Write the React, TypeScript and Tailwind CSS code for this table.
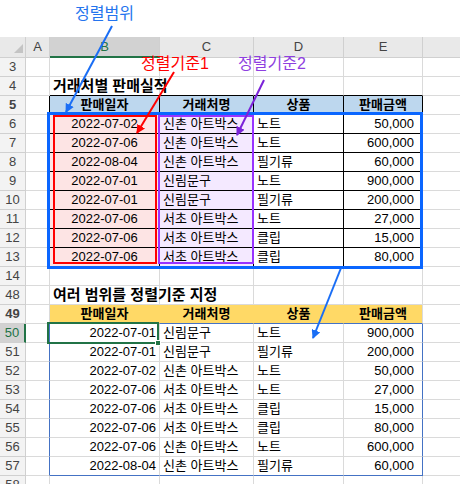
const upper = [
    ["2022-07-02", "신촌 아트박스", "노트", "50,000"],
    ["2022-07-06", "신촌 아트박스", "노트", "600,000"],
    ["2022-08-04", "신촌 아트박스", "필기류", "60,000"],
    ["2022-07-01", "신림문구", "노트", "900,000"],
    ["2022-07-01", "신림문구", "필기류", "200,000"],
    ["2022-07-06", "서초 아트박스", "노트", "27,000"],
    ["2022-07-06", "서초 아트박스", "클립", "15,000"],
    ["2022-07-06", "서초 아트박스", "클립", "80,000"],
];

const lower = [
    ["2022-07-01", "신림문구", "노트", "900,000"],
    ["2022-07-01", "신림문구", "필기류", "200,000"],
    ["2022-07-02", "신촌 아트박스", "노트", "50,000"],
    ["2022-07-06", "서초 아트박스", "노트", "27,000"],
    ["2022-07-06", "서초 아트박스", "클립", "15,000"],
    ["2022-07-06", "서초 아트박스", "클립", "80,000"],
    ["2022-07-06", "신촌 아트박스", "노트", "600,000"],
    ["2022-08-04", "신촌 아트박스", "필기류", "60,000"],
];

const headers = ["판매일자", "거래처명", "상품", "판매금액"];

const RowHead = ({ n, active = false }: { n: number; active?: boolean }) => (
    <div
        className={
            active
                ? "flex w-[26px] shrink-0 items-center justify-center border-r-2 border-b border-r-[#217346] border-b-[#d0d0d0] bg-[#d2d2d2] text-[#217346]"
                : "flex w-[26px] shrink-0 items-center justify-center border-r border-b border-[#d0d0d0] bg-[#f3f3f3] text-[#444]"
        }
    >
        {n}
    </div>
);

// plain grid row
const EmptyRow = ({ n }: { n: number }) => (
    <div className="flex h-[19px]">
        <RowHead n={n} />
        <div className="w-[24px] border-r border-b border-[#dadada]" />
        <div className="w-[110px] border-r border-b border-[#dadada]" />
        <div className="w-[94px] border-r border-b border-[#dadada]" />
        <div className="w-[90px] border-r border-b border-[#dadada]" />
        <div className="w-[79px] border-r border-b border-[#dadada]" />
        <div className="flex-1 border-b border-[#dadada]" />
    </div>
);

const TitleRow = ({ n, title }: { n: number; title: string }) => (
    <div className="flex h-[19px]">
        <RowHead n={n} />
        <div className="w-[24px] border-r border-b border-[#dadada]" />
        <div className="relative w-[110px] border-r border-b border-[#dadada]">
            <span className="absolute left-[3px] top-[-2px] whitespace-nowrap text-[15px] font-bold">{title}</span>
        </div>
        <div className="w-[94px] border-r border-b border-[#dadada]" />
        <div className="w-[90px] border-r border-b border-[#dadada]" />
        <div className="w-[79px] border-r border-b border-[#dadada]" />
        <div className="flex-1 border-b border-[#dadada]" />
    </div>
);

const App = () => {
    return (
        <div className="relative h-[484px] w-[460px] overflow-hidden bg-white text-[13px] text-black font-['Liberation_Sans','Noto_Sans_CJK_KR',sans-serif]">
            {/* callout above sheet */}
            <div className="h-[37px] pl-[75px] pt-[2px] text-[16px] text-[#2474ee]">정렬범위</div>

            {/* column letters */}
            <div className="flex h-[21px] text-[#444]">
                <div className="relative w-[26px] border-r border-b border-[#d0d0d0] bg-[#e9e9e9]">
                    <svg className="absolute left-[14px] top-[7px]" width="9" height="9" viewBox="0 0 9 9">
                        <polygon points="9,0 9,9 0,9" fill="#c4c4c4" />
                    </svg>
                </div>
                <div className="flex w-[24px] items-center justify-center border-r border-b border-[#d0d0d0] bg-[#e9e9e9]">A</div>
                <div className="flex w-[110px] items-center justify-center border-r border-b-2 border-r-[#d0d0d0] border-b-[#217346] bg-[#d2d2d2] text-[#217346]">B</div>
                <div className="flex w-[94px] items-center justify-center border-r border-b border-[#d0d0d0] bg-[#e9e9e9]">C</div>
                <div className="flex w-[90px] items-center justify-center border-r border-b border-[#d0d0d0] bg-[#e9e9e9]">D</div>
                <div className="flex w-[79px] items-center justify-center border-r border-b border-[#d0d0d0] bg-[#e9e9e9]">E</div>
                <div className="flex-1 border-b border-[#d0d0d0] bg-[#e9e9e9]" />
            </div>

            <EmptyRow n={3} />

            {/* row 4 title, bottom edge black under B-E */}
            <div className="flex h-[19px]">
                <RowHead n={4} />
                <div className="w-[24px] border-r border-b border-[#dadada]" />
                <div className="relative w-[110px] border-r border-b border-r-[#dadada] border-b-black">
                    <span className="absolute left-[3px] top-[-2px] whitespace-nowrap text-[15px] font-bold">거래처별 판매실적</span>
                </div>
                <div className="w-[94px] border-r border-b border-r-[#dadada] border-b-black" />
                <div className="w-[90px] border-r border-b border-r-[#dadada] border-b-black" />
                <div className="w-[79px] border-r border-b border-r-[#dadada] border-b-black" />
                <div className="flex-1 border-b border-[#dadada]" />
            </div>

            {/* row 5 header */}
            <div className="flex h-[19px] font-bold">
                <RowHead n={5} />
                <div className="w-[24px] border-r border-b border-r-black border-b-[#dadada]" />
                <div className="flex w-[110px] items-center justify-center border-r border-b border-black bg-[#bdd7ee]">{headers[0]}</div>
                <div className="flex w-[94px] items-center justify-center border-r border-b border-black bg-[#bdd7ee]">{headers[1]}</div>
                <div className="flex w-[90px] items-center justify-center border-r border-b border-black bg-[#bdd7ee]">{headers[2]}</div>
                <div className="flex w-[79px] items-center justify-center border-r border-b border-black bg-[#bdd7ee]">{headers[3]}</div>
                <div className="flex-1 border-b border-[#dadada]" />
            </div>

            {upper.map((r, i) => (
                <div key={i} className="flex h-[19px]">
                    <RowHead n={6 + i} />
                    <div className="w-[24px] border-r border-b border-r-black border-b-[#dadada]" />
                    <div className="flex w-[110px] items-center justify-center border-r border-b border-black bg-[#fde4e4]">{r[0]}</div>
                    <div className="flex w-[94px] items-center whitespace-nowrap border-r border-b border-black bg-[#f4e9ff] pl-[3px]">{r[1]}</div>
                    <div className="flex w-[90px] items-center border-r border-b border-black pl-[3px]">{r[2]}</div>
                    <div className="flex w-[79px] items-center justify-end border-r border-b border-black pr-[8px]">{r[3]}</div>
                    <div className="flex-1 border-b border-[#dadada]" />
                </div>
            ))}

            <EmptyRow n={14} />
            <TitleRow n={48} title="여러 범위를 정렬기준 지정" />

            {/* row 49 header */}
            <div className="flex h-[19px] font-bold">
                <RowHead n={49} />
                <div className="w-[24px] border-r border-b border-[#dadada]" />
                <div className="flex w-[110px] items-center justify-center border-r border-b border-r-[#ffd966] border-b-[#4472c4] bg-[#ffd966]">{headers[0]}</div>
                <div className="flex w-[94px] items-center justify-center border-r border-b border-r-[#ffd966] border-b-[#4472c4] bg-[#ffd966]">{headers[1]}</div>
                <div className="flex w-[90px] items-center justify-center border-r border-b border-r-[#ffd966] border-b-[#4472c4] bg-[#ffd966]">{headers[2]}</div>
                <div className="flex w-[79px] items-center justify-center border-r border-b border-r-[#dadada] border-b-[#4472c4] bg-[#ffd966]">{headers[3]}</div>
                <div className="flex-1 border-b border-[#dadada]" />
            </div>

            {lower.map((r, i) => {
                const last = i === lower.length - 1;
                const b = last ? "border-b-[#4472c4]" : "border-b-[#dadada]";
                return (
                    <div key={i} className="flex h-[19px]">
                        <RowHead n={50 + i} active={i === 0} />
                        <div className="w-[24px] border-r border-b border-r-[#4472c4] border-b-[#dadada]" />
                        <div className={`flex w-[110px] items-center justify-end border-r border-b border-r-[#dadada] pr-[3px] ${b}`}>{r[0]}</div>
                        <div className={`flex w-[94px] items-center whitespace-nowrap border-r border-b border-r-[#dadada] pl-[3px] ${b}`}>{r[1]}</div>
                        <div className={`flex w-[90px] items-center border-r border-b border-r-[#dadada] pl-[3px] ${b}`}>{r[2]}</div>
                        <div className={`flex w-[79px] items-center justify-end border-r border-b border-r-[#4472c4] pr-[8px] ${b}`}>{r[3]}</div>
                        <div className="flex-1 border-b border-[#dadada]" />
                    </div>
                );
            })}

            <EmptyRow n={58} />

            {/* overlay shapes */}
            <div className="pointer-events-none absolute left-[47px] top-[112px] h-[157px] w-[376px] border-[3px] border-[#0a66ff]" />
            <div className="pointer-events-none absolute left-[53px] top-[115px] h-[149px] w-[104px] border-2 border-[#ff0000]" />
            <div className="pointer-events-none absolute left-[158px] top-[115px] h-[149px] w-[96px] border-2 border-[#9933ff]" />

            {/* active cell B50 */}
            <div className="pointer-events-none absolute left-[47px] top-[322px] h-[22px] w-[112px] border-2 border-[#217346]" />
            <div className="pointer-events-none absolute left-[155px] top-[340px] h-[6px] w-[6px] border border-white bg-[#217346]" />

            <span className="absolute left-[141px] top-[52px] text-[16px] text-[#ff0000]">정렬기준1</span>
            <span className="absolute left-[238px] top-[52px] text-[16px] text-[#8e3fe0]">정렬기준2</span>

            <svg className="pointer-events-none absolute left-0 top-0" width="460" height="484">
                <defs>
                    <marker id="hb" markerWidth="9" markerHeight="9" refX="8" refY="4.5" orient="auto" markerUnits="userSpaceOnUse">
                        <polygon points="0,0 9,4.5 0,9" fill="#1a6ef5" />
                    </marker>
                    <marker id="hr" markerWidth="9" markerHeight="9" refX="8" refY="4.5" orient="auto" markerUnits="userSpaceOnUse">
                        <polygon points="0,0 9,4.5 0,9" fill="#ff0000" />
                    </marker>
                    <marker id="hp" markerWidth="9" markerHeight="9" refX="8" refY="4.5" orient="auto" markerUnits="userSpaceOnUse">
                        <polygon points="0,0 9,4.5 0,9" fill="#7a22d8" />
                    </marker>
                </defs>
                <line x1="112" y1="26" x2="66" y2="112" stroke="#1a6ef5" strokeWidth="2" markerEnd="url(#hb)" />
                <line x1="174" y1="72" x2="137" y2="133" stroke="#ff0000" strokeWidth="2" markerEnd="url(#hr)" />
                <line x1="264" y1="80" x2="237" y2="135" stroke="#7a22d8" strokeWidth="2" markerEnd="url(#hp)" />
                <line x1="341" y1="268" x2="313" y2="338" stroke="#1a6ef5" strokeWidth="2" markerEnd="url(#hb)" />
            </svg>
        </div>
    );
};

export default App;
